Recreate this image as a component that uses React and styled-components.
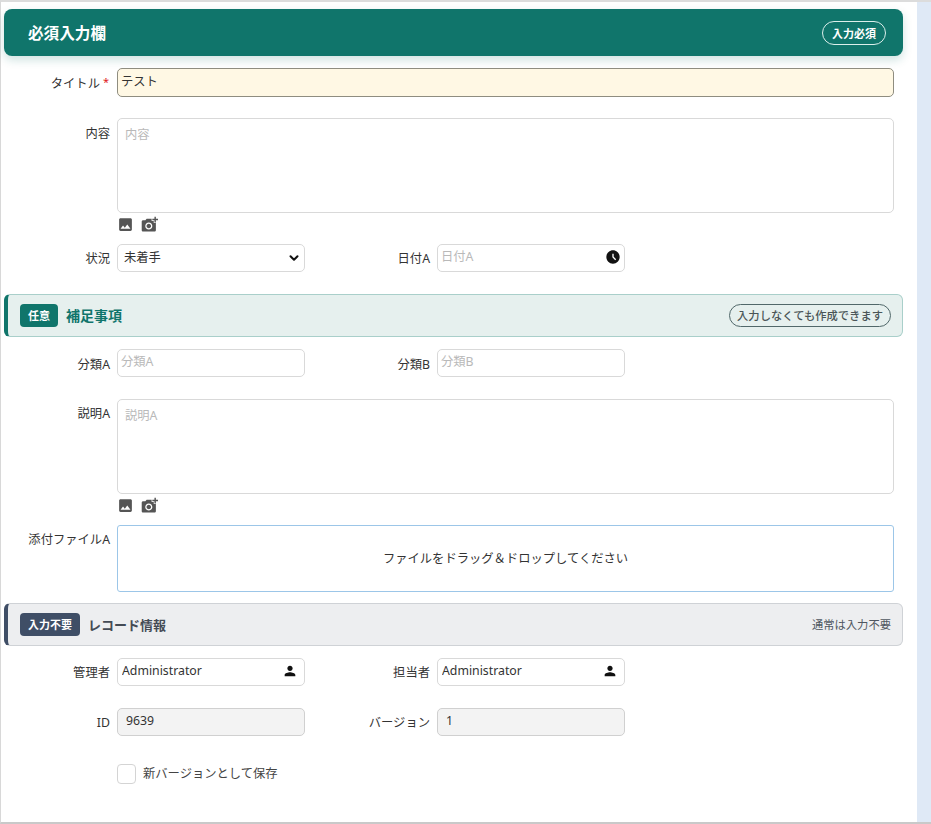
import React from 'react';
import styled, { createGlobalStyle } from 'styled-components';
import { MdImage, MdAddAPhoto, MdAccessTimeFilled, MdPerson } from 'react-icons/md';
import { ChevronDown } from 'lucide-react';

const FONT = `"Noto Sans", "Noto Sans CJK JP", sans-serif`;

const GlobalStyle = createGlobalStyle`
  html, body { margin: 0; padding: 0; background: #fff; }
  body { font-family: ${FONT}; color: #333; font-size: 12.3px; }
  * { box-sizing: border-box; }
`;

const Frame = styled.div`
  width: 931px;
  height: 824px;
  border-top: 2px solid #dcdcdc;
  border-bottom: 2px solid #c9c9c9;
  border-left: 1px solid #d8d8d8;
  display: flex;
`;

const Main = styled.main`
  width: 916px;
  padding-top: 7px;
`;

const SideStrip = styled.div`
  flex: 1;
  background: #dfe9f6;
`;

const RequiredHeader = styled.header`
  height: 47px;
  margin: 0 14px 0 3px;
  padding: 0 17px 0 24px;
  display: flex;
  align-items: center;
  justify-content: space-between;
  background: #10756b;
  border-radius: 8px;
  box-shadow: 0 4px 10px rgba(16, 117, 107, 0.2);
  color: #fff;
  font-size: 15.6px;
  font-weight: 700;
`;

const HeaderPill = styled.span`
  height: 24px;
  padding: 0 9px;
  display: flex;
  align-items: center;
  border: 1px solid #dcefeb;
  border-radius: 12px;
  font-size: 11px;
  font-weight: 700;
`;

const SectionBar = styled.section`
  height: 43px;
  margin: ${({ $top }) => $top}px 14px 0 3px;
  padding: 0 11px 1px 12px;
  display: flex;
  align-items: center;
  background: ${({ $bg }) => $bg};
  border: 1px solid ${({ $line }) => $line};
  border-left: 4px solid ${({ $accent }) => $accent};
  border-radius: 6px;
`;

const SectionBadge = styled.span`
  height: 23px;
  padding: 0 8px;
  display: flex;
  align-items: center;
  background: ${({ $bg }) => $bg};
  border-radius: 4px;
  color: #fff;
  font-size: 11px;
  font-weight: 700;
`;

const SectionTitle = styled.h2`
  margin: 0 0 0 8px;
  font-size: ${({ $size }) => $size}px;
  font-weight: 700;
  color: ${({ $color }) => $color};
`;

const OutlinePill = styled.span`
  margin-left: auto;
  height: 23px;
  padding: 0 7px;
  display: flex;
  align-items: center;
  border: 1px solid #51686a;
  border-radius: 12px;
  color: #4a5557;
  font-size: 11.3px;
  font-weight: 500;
`;

const SectionNote = styled.span`
  margin-left: auto;
  color: #4f5760;
  font-size: 11.3px;
`;

const Row = styled.div`
  display: flex;
  margin-top: ${({ $top }) => $top}px;
  padding-right: 23px;
`;

const Label = styled.label`
  flex: none;
  width: ${({ $width }) => $width}px;
  padding-right: 7px;
  padding-top: ${({ $top }) => $top ?? 6}px;
  text-align: right;
  font-size: 12.3px;
  line-height: 18px;
  color: #333;
  white-space: nowrap;
`;

const Star = styled.span`
  position: relative;
  top: -2px;
  margin: 0 1px 0 3px;
  font-size: 11px;
  color: #e02020;
`;

const boxBase = `
  border-radius: 5px;
  border: 1px solid #d9d9d9;
  font-family: ${FONT};
  font-size: 12.3px;
  color: #333;
  outline: none;
  &::placeholder { color: #b9b9b9; opacity: 1; }
`;

const TextInput = styled.input`
  ${boxBase}
  width: ${({ $wide }) => ($wide ? '100%' : '188px')};
  flex: ${({ $wide }) => ($wide ? 1 : 'none')};
  height: ${({ $height }) => $height ?? 28}px;
  padding: 0 4px 3px ${({ $padLeft }) => $padLeft ?? 3}px;
  background: ${({ $bg }) => $bg ?? '#fff'};
  ${({ $strong }) => $strong && 'border-color: #8f8d80;'}
  ${({ $muted }) => $muted && 'border-color: #d0d0d0;'}
`;

const TextArea = styled.textarea`
  ${boxBase}
  flex: 1;
  height: 95px;
  padding: 6px 7px;
  resize: none;
  display: block;
`;

const Picker = styled.select`
  ${boxBase}
  appearance: none;
  width: 188px;
  height: 28px;
  padding: 0 4px 2px 6px;
  background: #fff;
`;

const IconField = styled.div`
  position: relative;
  width: 188px;
  flex: none;
  display: flex;
`;

const FieldIcon = styled.span`
  position: absolute;
  right: ${({ $right }) => $right}px;
  top: ${({ $top }) => $top ?? 5}px;
  display: flex;
  color: #111;
  font-size: ${({ $size }) => $size}px;
  pointer-events: none;
`;

const MediaTools = styled.div`
  height: 31px;
  margin-left: 116px;
  padding-top: 3px;
  display: flex;
  gap: 7px;
  align-items: flex-start;
  color: #555;
  font-size: 17px;
  svg { display: block; }
`;

const CameraIcon = styled(MdAddAPhoto)`
  transform: scaleX(-1);
`;

const DropZone = styled.div`
  flex: 1;
  height: 67px;
  padding-bottom: 2px;
  display: flex;
  align-items: center;
  justify-content: center;
  border: 1px solid #9cc6e8;
  border-radius: 3px;
  font-size: 12.3px;
  color: #333;
`;

const CheckLine = styled.label`
  margin: 28px 0 0 116px;
  display: flex;
  align-items: center;
  gap: 7px;
  font-size: 12.3px;
  color: #444;
`;

const CheckText = styled.span`
  margin-top: -3px;
`;

const CheckBox = styled.input`
  appearance: none;
  margin: 0;
  width: 19px;
  height: 20px;
  border: 1px solid #d4d4d4;
  border-radius: 4px;
  background: #fff;
`;

const MediaRow = () => (
  <MediaTools>
    <MdImage />
    <CameraIcon />
  </MediaTools>
);

const App = () => (
  <>
    <GlobalStyle />
    <Frame>
      <Main>
        <RequiredHeader>
          <span>必須入力欄</span>
          <HeaderPill>入力必須</HeaderPill>
        </RequiredHeader>

        <Row $top={12}>
          <Label $width={116} $top={7}>タイトル<Star>*</Star></Label>
          <TextInput $wide $height={29} $bg="#fff8e4" $strong defaultValue="テスト" />
        </Row>
        <Row $top={21}>
          <Label $width={116} $top={7}>内容</Label>
          <TextArea placeholder="内容" />
        </Row>
        <MediaRow />
        <Row $top={0}>
          <Label $width={116}>状況</Label>
          <IconField>
            <Picker defaultValue="未着手">
              <option>未着手</option>
            </Picker>
            <FieldIcon $right={4} $top={7} $size={14}>
              <ChevronDown size={14} strokeWidth={3.5} />
            </FieldIcon>
          </IconField>
          <Label $width={132}>日付A</Label>
          <IconField>
            <TextInput placeholder="日付A" />
            <FieldIcon $right={4} $size={16}><MdAccessTimeFilled /></FieldIcon>
          </IconField>
        </Row>

        <SectionBar $top={22} $bg="#e6f0ee" $line="#a9cfca" $accent="#10756b">
          <SectionBadge $bg="#10756b">任意</SectionBadge>
          <SectionTitle $size={14} $color="#10756b">補足事項</SectionTitle>
          <OutlinePill>入力しなくても作成できます</OutlinePill>
        </SectionBar>

        <Row $top={12}>
          <Label $width={116} $top={7}>分類A</Label>
          <TextInput placeholder="分類A" />
          <Label $width={132} $top={7}>分類B</Label>
          <TextInput placeholder="分類B" />
        </Row>
        <Row $top={22}>
          <Label $width={116} $top={6}>説明A</Label>
          <TextArea placeholder="説明A" />
        </Row>
        <MediaRow />
        <Row $top={0}>
          <Label $width={116} $top={6}>添付ファイルA</Label>
          <DropZone>ファイルをドラッグ＆ドロップしてください</DropZone>
        </Row>

        <SectionBar $top={11} $bg="#edeef0" $line="#cfd2d6" $accent="#3f4e66">
          <SectionBadge $bg="#3f4e66">入力不要</SectionBadge>
          <SectionTitle $size={13} $color="#444b55">レコード情報</SectionTitle>
          <SectionNote>通常は入力不要</SectionNote>
        </SectionBar>

        <Row $top={12}>
          <Label $width={116}>管理者</Label>
          <IconField>
            <TextInput $padLeft={4} defaultValue="Administrator" />
            <FieldIcon $right={7} $size={16}><MdPerson /></FieldIcon>
          </IconField>
          <Label $width={132}>担当者</Label>
          <IconField>
            <TextInput $padLeft={4} defaultValue="Administrator" />
            <FieldIcon $right={7} $size={16}><MdPerson /></FieldIcon>
          </IconField>
        </Row>
        <Row $top={22}>
          <Label $width={116}>ID</Label>
          <TextInput readOnly $padLeft={8} $bg="#f3f3f3" $muted defaultValue="9639" />
          <Label $width={132}>バージョン</Label>
          <TextInput readOnly $padLeft={8} $bg="#f3f3f3" $muted defaultValue="1" />
        </Row>

        <CheckLine>
          <CheckBox type="checkbox" />
          <CheckText>新バージョンとして保存</CheckText>
        </CheckLine>
      </Main>
      <SideStrip />
    </Frame>
  </>
);

export default App;
